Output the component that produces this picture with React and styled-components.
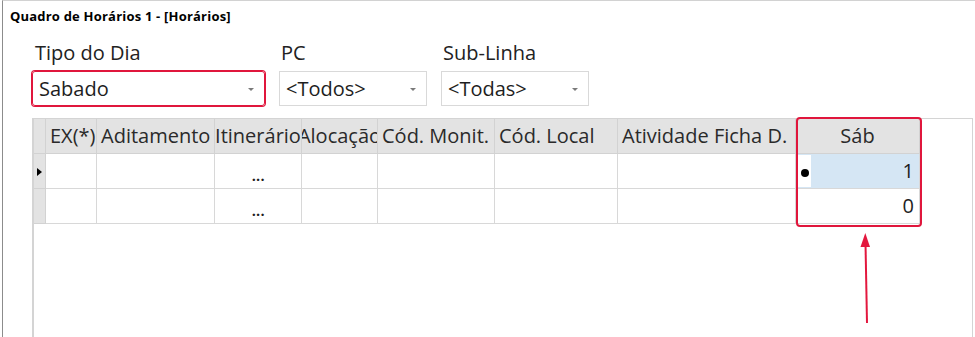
import styled, { createGlobalStyle } from "styled-components";

const GlobalStyle = createGlobalStyle`
  html, body {
    margin: 0;
    padding: 0;
    background: #ffffff;
    overflow: hidden;
  }
  body {
    font-family: "Open Sans", "Noto Sans", sans-serif;
    color: #1e1e1e;
  }
`;

const Window = styled.div`
  margin-left: 2px;
  height: 337px;
  box-sizing: border-box;
  border-top: 1px solid #d2d2d2;
  border-left: 1px solid #8c8c8c;
  background: #ffffff;
`;

const TitleBar = styled.div`
  padding: 7px 0 0 7px;
  height: 16px;
  font-size: 13px;
  line-height: 16px;
  letter-spacing: 0.2px;
  font-weight: 700;
  color: #000;
`;

const Filters = styled.div`
  display: flex;
  gap: 14px;
  padding-left: 29px;
  margin-top: 17px;
`;

const FilterGroup = styled.div`
  display: flex;
  flex-direction: column;
  width: ${(p) => p.$width}px;
`;

const Label = styled.div`
  font-size: 20px;
  line-height: 24px;
  padding-left: ${(p) => p.$indent || 2}px;
  color: #222;
  margin-bottom: 6px;
`;

const Select = styled.div`
  height: 35px;
  box-sizing: border-box;
  display: flex;
  align-items: center;
  justify-content: space-between;
  padding: 0 10px 0 6px;
  border: 1px solid ${(p) => (p.$highlight ? "#e0163c" : "#d9d9d9")};
  border-radius: ${(p) => (p.$highlight ? "3px" : "0")};
  box-shadow: ${(p) => (p.$highlight ? "0 0 0 1px #e0163c" : "none")};
  font-size: 20px;
  color: #1e1e1e;
`;

const Caret = styled.span`
  width: 0;
  height: 0;
  border-left: 3px solid transparent;
  border-right: 3px solid transparent;
  border-top: 3px solid #7a7a7a;
  margin-top: 2px;
`;

const GridBox = styled.div`
  position: relative;
  margin: 12px 0 0 29px;
  width: 941px;
  height: 230px;
  box-sizing: border-box;
  border-top: 1px solid #d4d4d4;
  border-left: 2px solid #d4d4d4;
  border-right: 1px solid #d4d4d4;
`;

const Table = styled.div`
  display: grid;
  grid-template-columns: 12px 51px 118px 87px 76px 117px 123px 178px 124px;
  grid-auto-rows: 35px;
  width: max-content;
`;

const HeadCell = styled.div`
  background: #e3e3e3;
  border-right: 1px solid #d2d2d2;
  border-bottom: 1px solid #d2d2d2;
  font-size: 20px;
  line-height: 34px;
  white-space: nowrap;
  overflow: hidden;
  display: flex;
  justify-content: ${(p) => (p.$align === "center" ? "center" : "flex-start")};
  padding-left: ${(p) => (p.$align === "center" ? 0 : 4)}px;
  color: #2a2a2a;
`;

const RowHead = styled.div`
  background: #e3e3e3;
  border-right: 1px solid #d2d2d2;
  border-bottom: 1px solid #d2d2d2;
  display: flex;
  align-items: center;
  padding-left: 3px;
`;

const Pointer = styled.span`
  width: 0;
  height: 0;
  border-top: 4px solid transparent;
  border-bottom: 4px solid transparent;
  border-left: 5px solid #000;
  margin-top: 2px;
`;

const Cell = styled.div`
  border-right: 1px solid #d8d8d8;
  border-bottom: 1px solid #d8d8d8;
  background: ${(p) => (p.$selected ? "#d5e6f4" : "#fff")};
  font-size: 20px;
  line-height: 34px;
  display: flex;
  align-items: center;
  justify-content: ${(p) =>
    p.$align === "right" ? "flex-end" : p.$align === "center" ? "center" : "flex-start"};
  padding-right: ${(p) => (p.$align === "right" ? 5 : 0)}px;
  color: #1e1e1e;
`;

const Ellipsis = styled.span`
  font-size: 17px;
  font-weight: 600;
  letter-spacing: -0.3px;
  margin-top: 8px;
`;

const BulletBox = styled.span`
  width: 15px;
  align-self: stretch;
  margin: 1px auto 1px 0;
  background: #fff;
  display: flex;
  align-items: center;
  justify-content: center;
`;

const Bullet = styled.span`
  width: 8px;
  height: 8px;
  border-radius: 50%;
  background: #000;
  margin: 4px 0 0 2px;
`;

const Highlight = styled.div`
  position: absolute;
  left: 762px;
  top: -2px;
  width: 126px;
  height: 110px;
  box-sizing: border-box;
  border: 2px solid #e0163c;
  border-radius: 4px;
  pointer-events: none;
`;

const Arrow = styled.svg`
  position: absolute;
  left: 821px;
  top: 112px;
`;

const columns = [
  { key: "ex", title: "EX(*)" },
  { key: "adit", title: "Aditamento" },
  { key: "itin", title: "Itinerário", align: "center" },
  { key: "aloc", title: "Alocação", align: "center" },
  { key: "monit", title: "Cód. Monit." },
  { key: "local", title: "Cód. Local" },
  { key: "ativ", title: "Atividade Ficha D." },
  { key: "sab", title: "Sáb", align: "center" },
];

const rows = [
  { current: true, sab: "1" },
  { current: false, sab: "0" },
];

const App = () => {
  return (
    <Window>
      <GlobalStyle />
      <TitleBar>Quadro de Horários 1 - [Horários]</TitleBar>
      <Filters>
        <FilterGroup $width={233}>
          <Label $indent={3}>Tipo do Dia</Label>
          <Select $highlight>
            Sabado
            <Caret />
          </Select>
        </FilterGroup>
        <FilterGroup $width={148}>
          <Label>PC</Label>
          <Select>
            &lt;Todos&gt;
            <Caret />
          </Select>
        </FilterGroup>
        <FilterGroup $width={148}>
          <Label $indent={0}>Sub-Linha</Label>
          <Select>
            &lt;Todas&gt;
            <Caret />
          </Select>
        </FilterGroup>
      </Filters>

      <GridBox>
        <Table>
          <RowHead />
          {columns.map((c) => (
            <HeadCell key={c.key} $align={c.align}>
              {c.title}
            </HeadCell>
          ))}
          {rows.map((r, i) => [
            <RowHead key={`h${i}`}>{r.current && <Pointer />}</RowHead>,
            <Cell key={`ex${i}`} />,
            <Cell key={`ad${i}`} />,
            <Cell key={`it${i}`} $align="center">
              <Ellipsis>...</Ellipsis>
            </Cell>,
            <Cell key={`al${i}`} />,
            <Cell key={`mo${i}`} />,
            <Cell key={`lo${i}`} />,
            <Cell key={`at${i}`} />,
            <Cell key={`sa${i}`} $align="right" $selected={r.current}>
              {r.current && (
                <BulletBox>
                  <Bullet />
                </BulletBox>
              )}
              {r.sab}
            </Cell>,
          ])}
        </Table>
        <Highlight />
        <Arrow width="24" height="96" viewBox="0 0 24 96">
          <line x1="12" y1="92" x2="10.5" y2="12" stroke="#e3173e" strokeWidth="2" />
          <polygon points="10.3,2 5.5,16 15,16" fill="#e3173e" />
        </Arrow>
      </GridBox>
    </Window>
  );
};

export default App;
